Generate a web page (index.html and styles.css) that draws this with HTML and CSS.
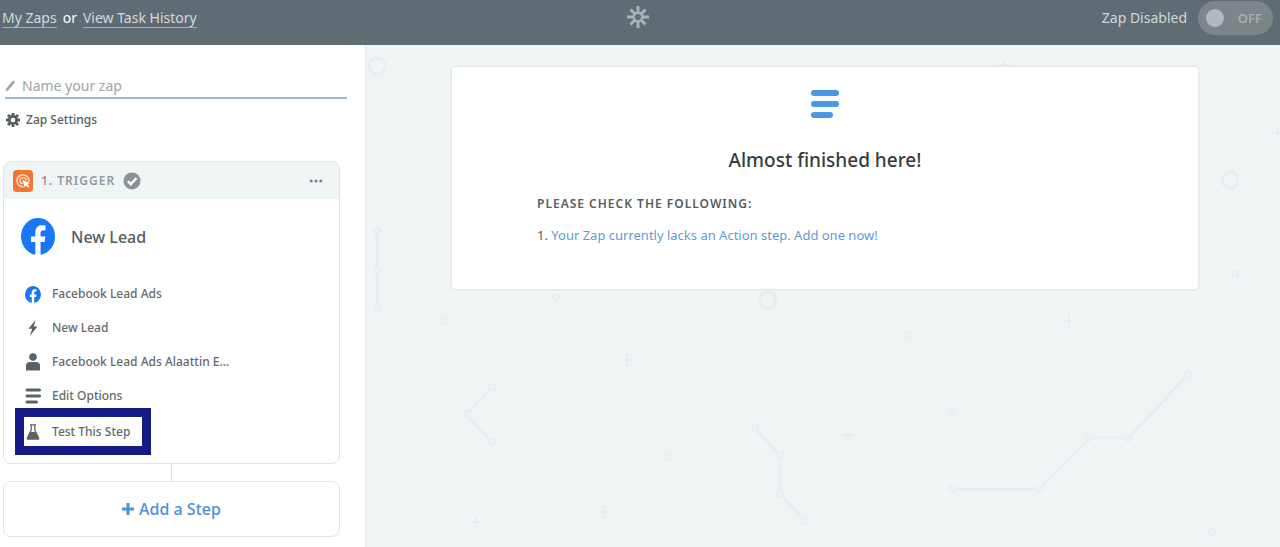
FILE: index.html
```html
<!DOCTYPE html>
<html lang="en">
<head>
  <meta charset="UTF-8">
  <title>Zap Editor</title>
  <link rel="stylesheet" href="styles.css">
</head>
<body>

  <!-- Shared icons -->
  <svg class="icon-defs" width="0" height="0" aria-hidden="true">
    <symbol id="facebook" viewBox="0 0 24 24" preserveAspectRatio="none">
      <path d="M24 12a12 12 0 1 0-13.9 11.9v-8.4H7.1V12h3V9.400c0-3 1.800-4.700 4.500-4.700 1.300 0 2.700.2 2.700.2v3h-1.500c-1.500 0-2 .9-2 1.900V12h3.400l-.5 3.500h-2.900v8.400A12 12 0 0 0 24 12z" fill="#1977f3"/>
    </symbol>
  </svg>

  <header class="topbar">
    <nav class="topbar-links">
      <a href="#">My Zaps</a>
      <span>or</span>
      <a href="#">View Task History</a>
    </nav>
    <svg class="logo" viewBox="0 0 22 22" fill="none" stroke="#a9b1b5" stroke-width="3">
      <circle cx="11" cy="11" r="4.300" stroke-width="2.400"/>
      <path d="M11 0v7M11 15v7M0 11h7M15 11h7M3.500 3.500l4.700 4.700M13.800 13.800l4.700 4.700M18.500 3.500l-4.700 4.700M8.200 13.800l-4.700 4.700"/>
    </svg>
    <div class="zap-status">
      <label for="zapToggle">Zap Disabled</label>
      <div class="toggle">
        <input type="checkbox" id="zapToggle">
        <span>OFF</span>
      </div>
    </div>
  </header>

  <div class="editor">
    <!-- Steps -->
    <aside class="sidebar">
      <label class="zap-name">
        <svg viewBox="0 0 11 13" width="11" height="13" fill="#a3a6a6"><path d="M.5 12.500l.8-3L8 1.500 10.200 3.300 3.400 11.300z"/></svg>
        <input type="text" placeholder="Name your zap" aria-label="Zap name">
      </label>

      <button class="settings">
        <svg viewBox="0 0 14 14" width="14" height="14" fill="none" stroke="#555d60">
          <circle cx="7" cy="7" r="3.700" stroke-width="2.800"/>
          <path d="M7 0v2.500M7 11.500V14M0 7h2.500M11.500 7H14M2 2l1.800 1.800M10.200 10.200L12 12M12 2l-1.800 1.800M3.800 10.200L2 12" stroke-width="2.800"/>
        </svg>
        Zap Settings
      </button>

      <section class="step">
        <div class="step-header">
          <svg viewBox="0 0 20 22" width="20" height="22">
            <rect width="20" height="22" rx="4" fill="#f0772f"/>
            <g fill="none" stroke="#ffe3d0" stroke-width="1.400">
              <path d="M15.800 12A6 6 0 1 0 10.500 16.800"/>
              <path d="M13 10.500A3 3 0 1 0 10 13.600"/>
            </g>
            <path d="M9.500 10l7.500 3-2.500 1.200 2 2.300-1.400 1.200-2-2.300-1.300 2.200z" fill="#fff"/>
          </svg>
          <h2>1. TRIGGER</h2>
          <svg viewBox="0 0 18 18" width="18" height="18">
            <circle cx="9" cy="9" r="8.500" fill="#8b9195"/>
            <path d="M4.800 9.200l3 3 5.600-6.200" fill="none" stroke="#fff" stroke-width="2.400"/>
          </svg>
          <button class="more" aria-label="More options">
            <svg viewBox="0 0 14 4" width="14" height="4" fill="#7c8285"><circle cx="2.200" cy="2" r="1.600"/><circle cx="7" cy="2" r="1.600"/><circle cx="11.800" cy="2" r="1.600"/></svg>
          </button>
        </div>

        <div class="step-title">
          <svg width="34" height="37"><use href="#facebook"/></svg>
          <h3>New Lead</h3>
        </div>

        <ul class="step-list">
          <li><a href="#">
            <svg width="16" height="17"><use href="#facebook"/></svg>
            Facebook Lead Ads
          </a></li>
          <li><a href="#">
            <svg viewBox="0 0 16 16" width="16" height="16"><path d="M10.500 0L3.500 8.800h3.700L4.800 16l7.700-9.400H8.800z" fill="#596266"/></svg>
            New Lead
          </a></li>
          <li><a href="#">
            <svg viewBox="0 0 16 18" width="16" height="18" fill="#596266"><circle cx="8" cy="4" r="3.800"/><path d="M1 17.500V13a4 4 0 0 1 4-4h6a4 4 0 0 1 4 4v4.500z"/></svg>
            Facebook Lead Ads Alaattin E...
          </a></li>
          <li><a href="#">
            <svg viewBox="0 0 16 16" width="16" height="16" stroke="#596266" stroke-width="3" stroke-linecap="round"><path d="M2 2h12.500M2 8h12.500M2 14h9.500"/></svg>
            Edit Options
          </a></li>
          <li class="highlight"><a href="#">
            <svg viewBox="0 0 16 16" width="16" height="16"><path d="M5 .8h6M6.200 1v5L2.300 14M9.800 1v5l3.900 8" fill="none" stroke="#596266" stroke-width="1.300"/><path d="M5.600 8h4.800l3.800 6.500c.3.800 0 1.300-.8 1.300H2.600c-.8 0-1.100-.5-.8-1.300z" fill="#596266"/></svg>
            Test This Step
          </a></li>
        </ul>
      </section>

      <div class="connector"></div>

      <button class="add-step">
        <svg viewBox="0 0 12 12" width="12" height="12" stroke="#4a90d9" stroke-width="3"><path d="M6 0v12M0 6h12"/></svg>
        Add a Step
      </button>
    </aside>

    <!-- Zap status -->
    <main class="content">
      <svg class="pattern" width="914" height="502" fill="none" stroke="#e9edef" stroke-width="3" aria-hidden="true">
        <circle cx="11" cy="21" r="8"/>
        <circle cx="402" cy="255" r="8"/>
        <circle cx="864" cy="135" r="8"/>
        <path d="M11 190v32M11 229v31M123 345l-19 21M104 373l19 21M391 386l20 21M414 414v32M417 452l18 20M590 444h80M676 441l44-45M726 393h32M765 390l54-57"/>
        <g stroke-width="2">
          <circle cx="11" cy="186" r="3"/>
          <circle cx="11" cy="225" r="3"/>
          <circle cx="11" cy="264" r="3"/>
          <circle cx="126" cy="342" r="3"/>
          <circle cx="101" cy="369" r="3"/>
          <circle cx="126" cy="397" r="3"/>
          <circle cx="389" cy="383" r="3"/>
          <circle cx="414" cy="410" r="3"/>
          <circle cx="414" cy="449" r="3"/>
          <circle cx="439" cy="476" r="3"/>
          <circle cx="586" cy="444" r="3"/>
          <circle cx="674" cy="444" r="3"/>
          <circle cx="722" cy="393" r="3"/>
          <circle cx="762" cy="393" r="3"/>
          <circle cx="822" cy="329" r="3"/>
          <circle cx="79" cy="276" r="3"/>
          <circle cx="190" cy="252" r="3"/>
          <circle cx="303" cy="412" r="3"/>
          <circle cx="543" cy="290" r="3"/>
          <circle cx="586" cy="367" r="3"/>
          <circle cx="846" cy="487" r="3"/>
          <circle cx="869" cy="229" r="3"/>
          <path d="M703 270v14M698 276h10M110 470v14M104 477h12M238 461v12M232 467h12M482 384v12M476 390h12M638 14v12M632 20h12M261 309v12M255 315h12M912 82v12M906 88h12"/>
        </g>
      </svg>

      <section class="notice">
        <svg viewBox="0 0 28 28" width="28" height="28" fill="#4a98e3"><rect width="28" height="6" rx="3"/><rect y="11" width="28" height="6" rx="3"/><rect y="22" width="22" height="6" rx="3"/></svg>
        <h1>Almost finished here!</h1>
        <div class="checks">
          <h2>PLEASE CHECK THE FOLLOWING:</h2>
          <ol>
            <li><a href="#">Your Zap currently lacks an Action step. Add one now!</a></li>
          </ol>
        </div>
      </section>
    </main>
  </div>

</body>
</html>
```
FILE: styles.css
```css
* {
  box-sizing: border-box;
}

body {
  margin: 0;
  min-height: 100vh;
  display: flex;
  flex-direction: column;
  font-family: "Noto Sans", "Open Sans", sans-serif;
  font-size: 12px;
  line-height: 20px;
  color: #555d60;
  background-color: #eff4f5;
}

h1, h2, h3, ul, ol {
  margin: 0;
  padding: 0;
}

a {
  text-decoration: none;
}

button, input {
  font: inherit;
  color: inherit;
  background: none;
  border: none;
  padding: 0;
  margin: 0;
}

button {
  cursor: pointer;
}

svg {
  flex-shrink: 0;
}

.icon-defs {
  position: absolute;
}

/* Top bar */
.topbar {
  display: grid;
  grid-template-columns: 1fr auto 1fr;
  align-items: start;
  height: 45px;
  padding: 1px 7px 0 2px;
  background-color: #606c73;
  color: #d3d8da;
  font-size: 14px;
}

.topbar-links {
  display: flex;
  gap: 6px;
  padding-top: 7px;
  color: #fff;
}

.topbar-links a {
  color: #d3d8da;
  line-height: 19px;
  border-bottom: 1px solid #a5aeb1;
}

.logo {
  width: 22px;
  height: 22px;
  margin-top: 5px;
}

.zap-status {
  display: flex;
  align-items: center;
  justify-content: flex-end;
  gap: 11px;
}

.toggle {
  display: flex;
  align-items: center;
  justify-content: space-between;
  width: 75px;
  height: 34px;
  padding: 0 11px 0 8px;
  border-radius: 17px;
  background-color: #7c8588;
  color: #a5adb2;
  font-size: 13px;
  font-weight: 600;
}

.toggle input {
  appearance: none;
  width: 18px;
  height: 18px;
  border-radius: 50%;
  background-color: #b3b9c0;
}

/* Sidebar */
.editor {
  flex: 1;
  display: flex;
}

.sidebar {
  width: 366px;
  flex-shrink: 0;
  padding: 29px 25px 10px 3px;
  background-color: #fff;
  border-right: 1px solid #e3e7e8;
  font-weight: 500;
}

.zap-name {
  display: flex;
  align-items: center;
  gap: 6px;
  height: 25px;
  margin: 0 -7px 0 2px;
  border-bottom: 2px solid #9ab8cb;
  font-size: 14px;
  font-weight: 400;
}

.zap-name input {
  flex: 1;
  outline: none;
}

.zap-name input::placeholder {
  color: #a0a3a3;
  opacity: 1;
}

.settings {
  display: flex;
  align-items: center;
  gap: 6px;
  margin: 11px 0 31px 3px;
}

.step {
  border: 1px solid #e1e5e6;
  border-radius: 8px;
  overflow: hidden;
}

.step-header {
  display: flex;
  align-items: center;
  gap: 8px;
  height: 37px;
  padding: 0 16px 0 9px;
  background-color: #eff4f5;
}

.step-header h2 {
  font-size: 12px;
  font-weight: 600;
  letter-spacing: 1px;
  color: #92989b;
}

.more {
  display: flex;
  margin-left: auto;
}

.step-title {
  display: flex;
  align-items: center;
  gap: 16px;
  padding: 19px 17px 22px;
}

.step-title h3 {
  font-size: 16px;
  font-weight: 500;
}

.step-list {
  list-style: none;
  padding: 0 11px 8px;
}

.step-list a {
  display: flex;
  align-items: center;
  gap: 11px;
  height: 34px;
  padding: 0 10px;
  color: #646a6c;
}

.step-list .highlight {
  width: max-content;
  margin-top: -5px;
  border: 9px solid #141b87;
}

.step-list .highlight a {
  height: 29px;
  padding: 0 12px 0 1px;
}

.connector {
  width: 1px;
  height: 17px;
  margin: 0 auto;
  background-color: #dcdfe0;
}

.add-step {
  display: flex;
  align-items: center;
  justify-content: center;
  gap: 5px;
  width: 100%;
  height: 56px;
  border: 1px solid #e1e5e6;
  border-radius: 8px;
  color: #4a90d9;
  font-size: 16px;
  font-weight: 500;
}

/* Content */
.content {
  position: relative;
  flex: 1;
  overflow: hidden;
  padding: 22px 82px 0 86px;
}

.pattern {
  position: absolute;
  top: 0;
  left: 0;
}

.notice {
  position: relative;
  display: flex;
  flex-direction: column;
  align-items: center;
  padding: 23px 85px 44px;
  background-color: #fff;
  border-radius: 4px;
  box-shadow: 0 0 3px rgba(0, 0, 0, 0.15);
}

.notice h1 {
  margin: 28px 0 20px;
  font-size: 19px;
  font-weight: 500;
  line-height: 28px;
  color: #363d40;
}

.checks {
  width: 100%;
}

.checks h2 {
  margin-bottom: 11px;
  font-size: 12px;
  font-weight: 600;
  letter-spacing: 1px;
}

.checks ol {
  list-style-position: inside;
  font-size: 13px;
}

.checks a {
  color: #5f9bd3;
}
```
